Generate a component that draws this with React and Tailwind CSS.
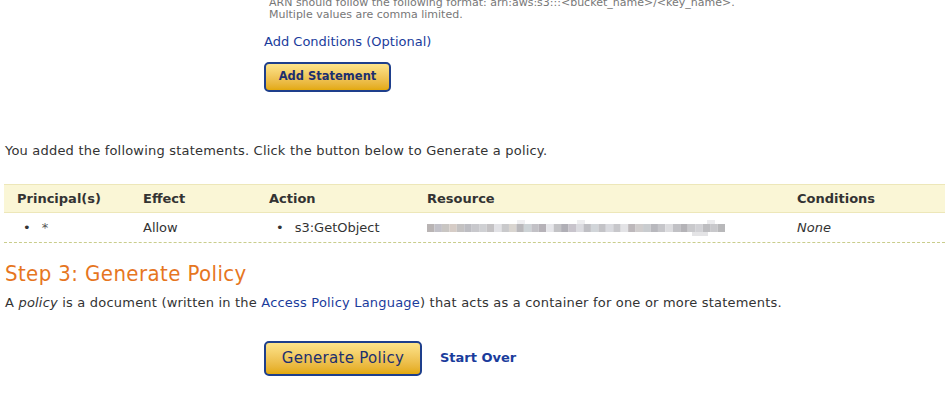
const BLUR = [
    "#b9b4b4", "#c2c1c8", "#c9c6c3", "#d6ccc6", "#c4c2c2", "#bdbdc2", "#c8c8cc", "#cfd0d3",
    "#c4c2c4", "#e2e2e6", "#c9c9cb", "#d9d5d0", "#b9b8bb", "#cdd3d6", "#c2c1c6", "#b6b2b8",
    "#e6e6ea", "#c3c3c6", "#b0afb6", "#c8c4cc", "#dbdbe0", "#bfbfc4", "#d1d5d9", "#c3c3c7",
    "#d9dadf", "#c7c7cb", "#e3e3e6", "#bdb8bb", "#d0cdcd", "#c9cccf", "#b8b8bd", "#c6c6ca",
    "#dcdcdf", "#c1c1c5", "#b4b3b7", "#c9c9cc", "#d1d1d5", "#bdbdc0", "#c8c8cb", "#b8b8ba",
];

function BlurredResource() {
    return (
        <svg width="298" height="16" viewBox="0 0 298 16">
            {BLUR.map((c, i) => (
                <rect key={i} x={i * 7.45} y="4" width="7.45" height="8" fill={c} />
            ))}
            <rect x="150" y="0" width="8" height="4" fill="#eeeef0" />
            <rect x="90" y="0" width="8" height="4" fill="#f0f0f2" />
            <rect x="280" y="0" width="8" height="4" fill="#ececee" />
            <rect x="265" y="12" width="16" height="4" fill="#e4e4e6" />
        </svg>
    );
}

export default function App() {
    return (
        <div className="relative h-[420px] w-[950px] overflow-hidden bg-white font-['Verdana','DejaVu_Sans',sans-serif] text-[#333]">
            {/* tail of step 2 form */}
            <div className="-mt-[3px] pl-[269px] text-[11px] leading-[12px] text-[#777]">
                <div>ARN should follow the following format: arn:aws:s3:::&lt;bucket_name&gt;/&lt;key_name&gt;.</div>
                <div>Multiple values are comma limited.</div>
            </div>

            <div className="pl-[264px] pt-[13px]">
                <a className="block text-[13px] leading-[16px] text-[#1a3c9c]">Add Conditions (Optional)</a>
                <div className="pt-[12px]">
                    <button className="h-[30px] w-[127px] rounded-[5px] border-2 border-[#1e3f8c] bg-gradient-to-b from-[#fde48a] to-[#e3a906] text-[11.5px] font-bold text-[#1c2f6f]">
                        Add Statement
                    </button>
                </div>
            </div>

            <p className="pl-[5px] pt-[51px] text-[13px] leading-[16px] tracking-[0.2px]">
                You added the following statements. Click the button below to Generate a policy.
            </p>

            {/* statements table */}
            <div className="ml-[4px] mr-[5px] mt-[25px]">
                <div className="flex h-[29px] items-center border-y border-[#ede7b9] bg-[#faf6d6] text-[13px] font-bold text-[#333]">
                    <div className="w-[126px] pl-[13px]">Principal(s)</div>
                    <div className="w-[126px] pl-[13px]">Effect</div>
                    <div className="w-[158px] pl-[13px]">Action</div>
                    <div className="w-[370px] pl-[13px]">Resource</div>
                    <div className="pl-[13px]">Conditions</div>
                </div>
                <div className="flex h-[30px] items-center border-b border-dashed border-[#c9cd8c] text-[13px]">
                    <div className="w-[126px] pl-[19px]">
                        <span className="mr-[11px]">•</span>
                        <span className="text-[#555]">*</span>
                    </div>
                    <div className="w-[126px] pl-[13px]">Allow</div>
                    <div className="w-[158px] pl-[20px]">
                        <span className="mr-[11px]">•</span>s3:GetObject
                    </div>
                    <div className="w-[370px] pl-[13px]">
                        <BlurredResource />
                    </div>
                    <div className="pl-[13px] italic">None</div>
                </div>
            </div>

            {/* step 3 */}
            <h2 className="pl-[5px] pt-[18px] font-['DejaVu_Sans_Condensed','DejaVu_Sans',sans-serif] text-[22px] leading-[26px] font-normal tracking-[0.4px] text-[#e6761f]">
                Step 3: Generate Policy
            </h2>
            <p className="pl-[5px] pt-[8px] text-[13px] leading-[16px] tracking-[0.2px]">
                A <i>policy</i> is a document (written in the{" "}
                <a className="text-[#1a3c9c]">Access Policy Language</a>) that acts as a container for one or more statements.
            </p>

            <div className="flex items-center pl-[264px] pt-[30px]">
                <button className="h-[35px] w-[158px] rounded-[5px] border-2 border-[#1e3f8c] bg-gradient-to-b from-[#fde48a] to-[#e3a906] text-[15px] tracking-[0.3px] text-[#1c2f6f]">
                    Generate Policy
                </button>
                <a className="ml-[18px] -mt-[1px] text-[13px] font-bold text-[#1a3c9c]">Start Over</a>
            </div>
        </div>
    );
}
